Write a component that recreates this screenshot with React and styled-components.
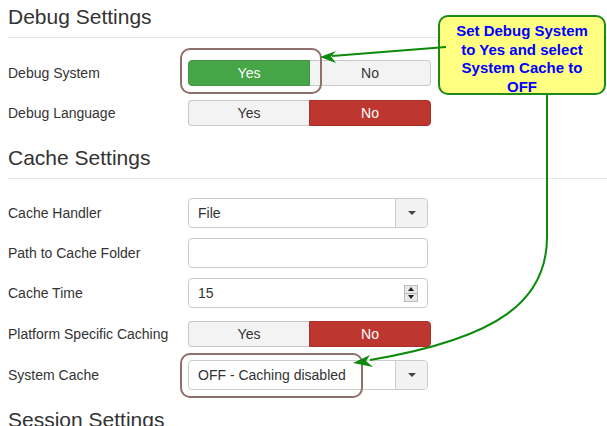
import React from 'react';
import styled, { createGlobalStyle } from 'styled-components';

const GlobalStyle = createGlobalStyle`
  html, body {
    margin: 0;
    padding: 0;
    background: #fff;
  }
  body {
    font-family: "Liberation Sans", Arial, Helvetica, sans-serif;
    color: #333;
  }
`;

const Page = styled.div`
  position: relative;
  width: 607px;
  height: 426px;
  overflow: hidden;
  padding-top: 5px;
  box-sizing: border-box;
`;

const Section = styled.div`
  margin-bottom: ${(p) => p.$after || 17}px;
`;

const Heading = styled.h2`
  margin: 0 0 0 8px;
  padding-bottom: 9px;
  font-size: 21px;
  font-weight: normal;
  line-height: 23px;
  color: #333;
  border-bottom: 1px solid #e5e5e5;
`;

const FieldList = styled.div`
  display: flex;
  flex-direction: column;
  gap: ${(p) => p.$gap}px;
  margin-top: 19px;
  padding-left: 8px;
`;

const Row = styled.div`
  display: flex;
  align-items: center;
  height: ${(p) => (p.$toggle ? 32 : 30)}px;
`;

const Label = styled.div`
  width: 180px;
  font-size: 14px;
  color: #333;
`;

const ToggleGroup = styled.div`
  display: flex;
  width: 243px;
  height: 26px;
`;

const ToggleButton = styled.div`
  flex: 1;
  display: flex;
  align-items: center;
  justify-content: center;
  font-size: 14px;
  box-sizing: border-box;
  background: ${(p) => (p.$on === 'yes' ? '#46a546' : p.$on === 'no' ? '#bd362f' : '#f3f3f3')};
  color: ${(p) => (p.$on ? '#fff' : '#333')};
  border: 1px solid ${(p) => (p.$on === 'yes' ? '#3f963f' : p.$on === 'no' ? '#a9302a' : '#c8c8c8')};
  &:first-child {
    border-radius: 4px 0 0 4px;
    ${(p) => (p.$on ? '' : 'border-right: none;')}
  }
  &:last-child {
    border-radius: 0 4px 4px 0;
    ${(p) => (p.$on ? '' : 'border-left: none;')}
  }
`;

const Field = styled.div`
  position: relative;
  display: flex;
  align-items: center;
  width: 240px;
  height: 30px;
  box-sizing: border-box;
  border: 1px solid #ccc;
  border-radius: 4px;
  background: #fff;
  font-size: 14px;
  color: #333;
`;

const FieldText = styled.div`
  flex: 1;
  padding-left: 9px;
`;

const DropButton = styled.div`
  width: 31px;
  height: 100%;
  display: flex;
  align-items: center;
  justify-content: center;
  background: #f2f2f2;
  border-left: 1px solid #ccc;
  border-radius: 0 3px 3px 0;
`;

const Caret = styled.span`
  width: 0;
  height: 0;
  border-left: 4px solid transparent;
  border-right: 4px solid transparent;
  border-top: 4px solid #444;
`;

const Spinner = styled.div`
  display: flex;
  flex-direction: column;
  width: 14px;
  height: 17px;
  margin-right: 9px;
  border: 1px solid #bbb;
  box-sizing: border-box;
`;

const SpinPart = styled.div`
  flex: 1;
  display: flex;
  align-items: center;
  justify-content: center;
  background: #e8e8e8;
  & + & {
    border-top: 1px solid #bbb;
  }
  span {
    width: 0;
    height: 0;
    border-left: 3px solid transparent;
    border-right: 3px solid transparent;
    ${(p) => (p.$up ? 'border-bottom: 4px solid #222;' : 'border-top: 4px solid #222;')}
  }
`;

const Highlight = styled.div`
  position: absolute;
  left: ${(p) => p.$x}px;
  top: ${(p) => p.$y}px;
  width: ${(p) => p.$w}px;
  height: ${(p) => p.$h}px;
  box-sizing: border-box;
  border: 2px solid #8e6f6a;
  border-radius: 10px;
  pointer-events: none;
`;

const Callout = styled.div`
  position: absolute;
  left: 438px;
  top: 15px;
  width: 168px;
  height: 80px;
  box-sizing: border-box;
  border: 2px solid #1b8a1b;
  border-radius: 10px;
  background: #ffff82;
  padding-top: 5px;
  text-align: center;
  font-family: "Liberation Sans", Arial, sans-serif;
  font-weight: bold;
  font-size: 15px;
  line-height: 18.7px;
  color: #0000ff;
`;

const Arrows = styled.svg`
  position: absolute;
  left: 0;
  top: 0;
  pointer-events: none;
`;

function Toggle({ value }) {
  return (
    <ToggleGroup>
      <ToggleButton $on={value === 'yes' ? 'yes' : undefined}>Yes</ToggleButton>
      <ToggleButton $on={value === 'no' ? 'no' : undefined}>No</ToggleButton>
    </ToggleGroup>
  );
}

function Select({ children }) {
  return (
    <Field>
      <FieldText>{children}</FieldText>
      <DropButton>
        <Caret />
      </DropButton>
    </Field>
  );
}

export default function App() {
  return (
    <>
      <GlobalStyle />
      <Page>
        <Section>
          <Heading>Debug Settings</Heading>
          <FieldList $gap={8}>
            <Row $toggle>
              <Label>Debug System</Label>
              <Toggle value="yes" />
            </Row>
            <Row $toggle>
              <Label>Debug Language</Label>
              <Toggle value="no" />
            </Row>
          </FieldList>
        </Section>

        <Section $after={18}>
          <Heading>Cache Settings</Heading>
          <FieldList $gap={10}>
            <Row>
              <Label>Cache Handler</Label>
              <Select>File</Select>
            </Row>
            <Row>
              <Label>Path to Cache Folder</Label>
              <Field />
            </Row>
            <Row>
              <Label>Cache Time</Label>
              <Field>
                <FieldText>15</FieldText>
                <Spinner>
                  <SpinPart $up><span /></SpinPart>
                  <SpinPart><span /></SpinPart>
                </Spinner>
              </Field>
            </Row>
            <Row $toggle>
              <Label>Platform Specific Caching</Label>
              <Toggle value="no" />
            </Row>
            <Row>
              <Label>System Cache</Label>
              <Select>OFF - Caching disabled</Select>
            </Row>
          </FieldList>
        </Section>

        <Section>
          <Heading>Session Settings</Heading>
        </Section>

        <Highlight $x={180} $y={48} $w={142} $h={46} />
        <Highlight $x={180} $y={353} $w={183} $h={45} />

        <Callout>
          Set Debug System<br />
          to Yes and select<br />
          System Cache to<br />
          OFF
        </Callout>

        <Arrows width="607" height="426" viewBox="0 0 607 426">
          <g fill="none" stroke="#0b8a0b" strokeWidth="2">
            <path d="M446 47 L332 56" />
            <path d="M547 95 L547 235 C548 300 500 338 370 360" />
          </g>
          <g fill="#0b8a0b">
            <polygon points="320,57 336,51 331,56.5 336,63" />
            <polygon points="353,363 370,355 366,361 373,367" />
          </g>
        </Arrows>
      </Page>
    </>
  );
}
